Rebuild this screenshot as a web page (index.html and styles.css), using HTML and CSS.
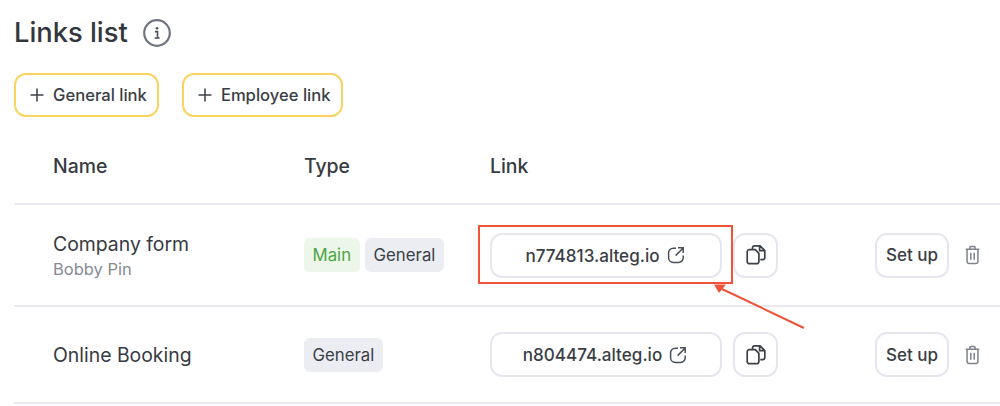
FILE: index.html
```html
<!DOCTYPE html>
<html lang="en">
<head>
<meta charset="utf-8">
<title>Links list</title>
<link rel="stylesheet" href="styles.css">
</head>
<body>
<main class="page">
  <header class="title-row">
    <h1>Links list</h1>
    <svg class="info" viewBox="0 0 28 28" width="28" height="28"><circle cx="14" cy="14" r="12.8" fill="none" stroke="#6f7480" stroke-width="2.2"/><circle cx="14" cy="9.2" r="1.3" fill="#4a4f58"/><path d="M11.9 12.6h2.6v6.2M11.6 19h5" fill="none" stroke="#4a4f58" stroke-width="1.6"/></svg>
  </header>
  <div class="actions">
    <button class="add"><svg viewBox="0 0 14 14" width="14" height="14"><path d="M7 .5v13M.5 7h13" stroke="#3d4148" stroke-width="1.5" fill="none"/></svg>General link</button>
    <button class="add"><svg viewBox="0 0 14 14" width="14" height="14"><path d="M7 .5v13M.5 7h13" stroke="#3d4148" stroke-width="1.5" fill="none"/></svg>Employee link</button>
  </div>
  <div class="row head">
    <div>Name</div><div>Type</div><div>Link</div>
  </div>
  <div class="row first">
    <div class="name has-sub">Company form<small>Bobby Pin</small></div>
    <div class="tags"><span class="tag green">Main</span><span class="tag">General</span></div>
    <div class="link-cell">
      <a class="link">n774813.alteg.io<svg viewBox="0 0 18 18" width="18" height="18"><path d="M9 2.2H6.2A4.6 4.6 0 0 0 1.6 6.8v5a4.6 4.6 0 0 0 4.6 4.6h5.4a4.6 4.6 0 0 0 4.6-4.6V9.400M8.600 9.600 16 2.200M11 1.800h5.200v5.200" fill="none" stroke="#4a4f58" stroke-width="1.5"/></svg></a>
      <button class="square"><svg viewBox="0 0 20 20" width="20" height="20"><path d="M6.500 4V3a2.200 2.200 0 0 1 2.200-2.200h5.300L18.800 5.500v7a2.200 2.200 0 0 1-2.200 2.200h-2.300M13.600 1v4.700h5" fill="none" stroke="#3d4148" stroke-width="1.700"/><path d="M3.400 4.600h5.800l3.700 3.700v8.200a2.200 2.200 0 0 1-2.200 2.200H3.400a2.200 2.200 0 0 1-2.200-2.200V6.800a2.200 2.200 0 0 1 2.200-2.200Z" fill="#fff" stroke="#3d4148" stroke-width="1.700"/></svg></button>
    </div>
    <button class="setup">Set up</button>
    <svg class="trash" viewBox="0 0 16 20" width="15" height="20"><path d="M.8 3.800h14.400M5.200 3.600V2.200A1.200 1.200 0 0 1 6.400 1h3.200a1.200 1.200 0 0 1 1.200 1.200v1.400M2.200 4v12.600A2.400 2.400 0 0 0 4.600 19h6.800a2.400 2.400 0 0 0 2.400-2.400V4M6.200 7.500v7.500M9.800 7.500v7.500" fill="none" stroke="#7d828c" stroke-width="1.600"/></svg>
  </div>
  <div class="row second">
    <div class="name">Online Booking</div>
    <div class="tags"><span class="tag">General</span></div>
    <div class="link-cell">
      <a class="link">n804474.alteg.io<svg viewBox="0 0 18 18" width="18" height="18"><path d="M9 2.2H6.2A4.6 4.6 0 0 0 1.6 6.8v5a4.6 4.6 0 0 0 4.6 4.6h5.4a4.6 4.6 0 0 0 4.6-4.6V9.400M8.600 9.600 16 2.200M11 1.800h5.200v5.200" fill="none" stroke="#4a4f58" stroke-width="1.5"/></svg></a>
      <button class="square"><svg viewBox="0 0 20 20" width="20" height="20"><path d="M6.500 4V3a2.200 2.200 0 0 1 2.200-2.200h5.300L18.800 5.500v7a2.200 2.200 0 0 1-2.200 2.200h-2.300M13.600 1v4.700h5" fill="none" stroke="#3d4148" stroke-width="1.700"/><path d="M3.400 4.600h5.800l3.700 3.700v8.200a2.200 2.200 0 0 1-2.200 2.200H3.400a2.200 2.200 0 0 1-2.200-2.200V6.800a2.200 2.200 0 0 1 2.200-2.200Z" fill="#fff" stroke="#3d4148" stroke-width="1.700"/></svg></button>
    </div>
    <button class="setup">Set up</button>
    <svg class="trash" viewBox="0 0 16 20" width="15" height="20"><path d="M.8 3.800h14.400M5.200 3.600V2.200A1.200 1.200 0 0 1 6.400 1h3.200a1.200 1.200 0 0 1 1.200 1.200v1.400M2.200 4v12.600A2.400 2.400 0 0 0 4.600 19h6.800a2.400 2.400 0 0 0 2.400-2.400V4M6.200 7.500v7.500M9.800 7.500v7.500" fill="none" stroke="#7d828c" stroke-width="1.600"/></svg>
  </div>
  <div class="callout-box"></div>
  <svg class="callout-arrow" viewBox="0 0 100 50" width="100" height="50"><path d="M92 44 10 5" stroke="#f0533a" stroke-width="2" fill="none"/><path d="M2 .5 14 .5 7 9Z" fill="#f0533a"/></svg>
</main>
</body>
</html>
```

FILE: styles.css
```css
* { box-sizing: border-box; }
html, body { margin: 0; background: #fff; }
body { width: 1000px; height: 406px; overflow: hidden; font-family: Inter, "Liberation Sans", sans-serif; color: #363a41; }
.page { position: relative; padding: 14px 0 0 14px; height: 406px; }
.title-row { display: flex; align-items: center; gap: 15px; height: 38px; }
h1 { margin: 0; font-size: 27.300px; line-height: 38px; font-weight: 500; color: #33373d; }
.info { flex: none; }
.actions { display: flex; gap: 23px; margin-top: 21px; }
.add { display: flex; align-items: center; gap: 9px; height: 44px; padding: 0 10px 0 14px; background: #fff; border: 2px solid #fbd35f; border-radius: 12px; font: 450 16.600px Inter, sans-serif; color: #3a3e45; }
.row { display: grid; grid-template-columns: 251px 186px 385px 74px 51px; align-items: center; padding-left: 39px; border-bottom: 2px solid #e9eaf0; }
.head { height: 88px; padding-top: 12px; font-size: 19.400px; font-weight: 450; color: #363a41; }
.first { height: 102px; }
.second { height: 97px; }
.name { font-size: 19.400px; line-height: 24px; color: #363a41; }
.name.has-sub { padding-top: 3px; }
.name small { display: block; font-size: 16.500px; line-height: 26px; color: #868a94; }
.tags { display: flex; gap: 5.500px; }
.tag { display: block; height: 34px; padding: 0 8.500px; line-height: 34px; font-size: 16.800px; border-radius: 6px; background: #ebedf3; color: #3a3e45; }
.tag.green { background: #ecf7ea; color: #4aa544; }
.link-cell { display: flex; gap: 11px; }
.link { display: flex; align-items: center; justify-content: center; gap: 7px; width: 232px; height: 45px; padding-right: 2px; border: 2px solid #e6e7ee; border-radius: 12px; font-size: 17.100px; font-weight: 450; color: #3a3e45; }
.square { display: flex; align-items: center; justify-content: center; width: 45px; height: 45px; padding: 0; background: #fff; border: 2px solid #e6e7ee; border-radius: 12px; }
.setup { width: 74px; height: 45px; padding: 0; background: #fff; border: 2px solid #e6e7ee; border-radius: 12px; font: 450 17px Inter, sans-serif; color: #3a3e45; }
.trash { justify-self: end; margin-right: 20px; }
.callout-box { position: absolute; left: 478px; top: 225px; width: 255px; height: 59px; border: 2.500px solid #f0533a; }
.callout-arrow { position: absolute; left: 712px; top: 284px; }
```
